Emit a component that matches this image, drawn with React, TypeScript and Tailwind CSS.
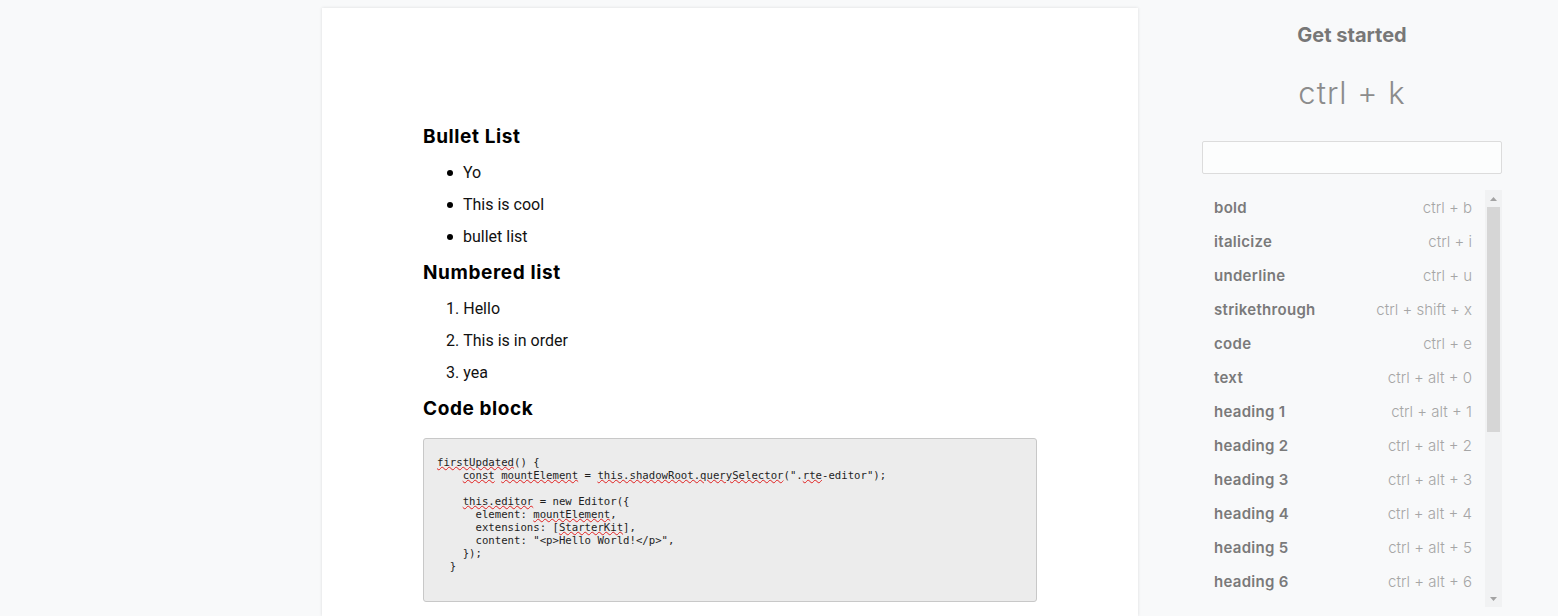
import React from "react";

const heading = "font-['Inter','Noto_Sans',sans-serif]";

function Squig({ children }: { children: React.ReactNode }) {
  return (
    <span className="underline decoration-wavy decoration-[#e02020] decoration-1 underline-offset-0">
      {children}
    </span>
  );
}

const items: [string, string][] = [
  ["bold", "ctrl + b"],
  ["italicize", "ctrl + i"],
  ["underline", "ctrl + u"],
  ["strikethrough", "ctrl + shift + x"],
  ["code", "ctrl + e"],
  ["text", "ctrl + alt + 0"],
  ["heading 1", "ctrl + alt + 1"],
  ["heading 2", "ctrl + alt + 2"],
  ["heading 3", "ctrl + alt + 3"],
  ["heading 4", "ctrl + alt + 4"],
  ["heading 5", "ctrl + alt + 5"],
  ["heading 6", "ctrl + alt + 6"],
];

export default function App() {
  return (
    <div className="flex h-[616px] w-full overflow-hidden bg-[#f8f9fa]">
      <div className="flex-1" />
      <div className="mt-2 w-[816px] shrink-0 bg-white pt-[109px] px-[101px] shadow-[0_0_3px_rgba(0,0,0,0.12)]">
        <div className={`${heading} h-[40px] text-[19px] font-bold leading-[40px] tracking-[0.6px] text-black`}>Bullet List</div>
        <ul className="font-['Roboto',sans-serif] text-[16px] text-[#111]">
          {["Yo", "This is cool", "bullet list"].map((t) => (
            <li key={t} className="flex h-[32px] items-center pl-[24px]">
              <span className="mr-[10px] inline-block h-[6px] w-[6px] rounded-full bg-black" />
              {t}
            </li>
          ))}
        </ul>
        <div className={`${heading} h-[40px] text-[19px] font-bold leading-[40px] tracking-[0.6px] text-black`}>Numbered list</div>
        <ol className="font-['Roboto',sans-serif] text-[16px] text-[#111]">
          {["Hello", "This is in order", "yea"].map((t, i) => (
            <li key={t} className="flex h-[32px] items-center pl-[23px]">
              <span className="mr-[4px]">{i + 1}.</span>
              {t}
            </li>
          ))}
        </ol>
        <div className={`${heading} h-[40px] text-[19px] font-bold leading-[40px] tracking-[0.6px] text-black`}>Code block</div>
        <pre className="mt-[9px] h-[164px] rounded-[3px] border border-[#c8c8c8] bg-[#ececec] pl-[13px] pr-4 pt-[17px] font-['DejaVu_Sans_Mono',monospace] text-[10.67px] leading-[13px] text-[#1e1e1e]">
          <Squig>firstUpdated</Squig>() {"{"}
          {"\n    "}
          <Squig>const</Squig> <Squig>mountElement</Squig> = <Squig>this.shadowRoot.querySelector</Squig>(".<Squig>rte</Squig>-editor");
          {"\n\n    "}
          <Squig>this.editor</Squig> = new Editor{"({"}
          {"\n      "}element: <Squig>mountElement</Squig>,
          {"\n      "}extensions: [<Squig>StarterKit</Squig>],
          {"\n      "}content: "&lt;p&gt;Hello World!&lt;/p&gt;",
          {"\n    "}{"});"}
          {"\n  "}{"}"}
        </pre>
      </div>
      <div className={`ml-2 flex w-[412px] shrink-0 flex-col items-center ${heading}`}>
        <div className="mt-[24px] h-[22px] text-[20px] font-bold leading-[22px] text-[#777]">Get started</div>
        <div className="mt-[18px] h-[58px] text-[31px] font-light leading-[58px] tracking-[1px] text-[#8c8c8c]">ctrl + k</div>
        <div className="mt-[19px] h-[33px] w-[300px] rounded-[2px] border border-[#dcdcdc] bg-[#fcfdfd]" />
        <div className="mt-[16px] flex h-[417px] w-[300px] overflow-hidden">
          <div className="flex-1 overflow-hidden pt-[1px]">
            {items.map(([a, b]) => (
              <div key={a} className="flex h-[34px] items-center justify-between pl-[12px] pr-[13px] text-[15px]">
                <span className="font-semibold tracking-[0.3px] text-[#7a7a7a]">{a}</span>
                <span className="font-light text-[#a6a6a6]">{b}</span>
              </div>
            ))}
          </div>
          <div className="flex w-[17px] shrink-0 flex-col items-center bg-[#f1f2f3]">
            <div className="flex h-[17px] items-center justify-center">
              <svg width="7" height="4" viewBox="0 0 7 4"><path d="M0 4 L3.5 0 L7 4Z" fill="#a3a3a3" /></svg>
            </div>
            <div className="h-[225px] w-[13px] bg-[#d6d6d6]" />
            <div className="flex-1" />
            <div className="flex h-[17px] items-center justify-center">
              <svg width="7" height="4" viewBox="0 0 7 4"><path d="M0 0 L7 0 L3.5 4Z" fill="#a3a3a3" /></svg>
            </div>
          </div>
        </div>
      </div>
    </div>
  );
}
